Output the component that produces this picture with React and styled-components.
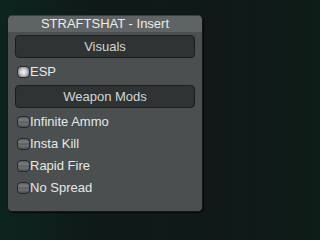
import React, { useState } from 'react';
import styled, { createGlobalStyle } from 'styled-components';

const GlobalStyle = createGlobalStyle`
    html, body {
        margin: 0;
        padding: 0;
        height: 100%;
    }
    body {
        background: linear-gradient(90deg, #0d241e 0%, #0f1a18 30%, #101918 70%, #0e1d19 100%);
        font-family: "Liberation Sans", Arial, sans-serif;
    }
`

const Page = styled.div`
    width: 219px;
    height: 230px;
    padding: 15px 0 0 7px;
    box-sizing: border-box;
`

const Window = styled.div`
    width: 196px;
    height: 197px;
    box-sizing: border-box;
    background: #4b4f4f;
    border: 1px solid #141717;
    border-top-color: #3a3e3e;
    border-radius: 5px;
    overflow: hidden;
    box-shadow: 1px 1px 1px rgba(0,0,0,0.6);
`

const TitleBar = styled.div`
    height: 16px;
    background: #5f6363;
    color: #ececec;
    font-size: 13px;
    line-height: 16px;
    text-align: center;
    white-space: nowrap;
`

const Content = styled.div`
    display: flex;
    flex-direction: column;
    gap: 6px;
    padding: 3px 7px 0 7px;
`

const SectionButton = styled.button`
    height: 23px;
    margin: 0;
    padding: 0;
    background: #2f3333;
    border: 1px solid #1b1e1e;
    border-radius: 4px;
    color: #d3d7d6;
    font-family: "Liberation Sans", Arial, sans-serif;
    font-size: 13px;
    line-height: 20px;
    cursor: pointer;
`

const ToggleGroup = styled.div`
    display: flex;
    flex-direction: column;
    gap: 7px;
`

const ToggleRow = styled.label`
    display: flex;
    align-items: center;
    height: 15px;
    padding-left: 2px;
    color: #e6e9e8;
    font-size: 13px;
    cursor: pointer;
`

const Box = styled.span`
    width: 13px;
    height: 12px;
    box-sizing: border-box;
    margin-right: 0;
    border: 1px solid #262929;
    border-radius: 4px;
    background: ${p => p.$on
        ? 'radial-gradient(circle at 50% 50%, #f2f2f2 0%, #d6d6d6 35%, #8a8d8d 75%, #555 100%)'
        : 'linear-gradient(180deg, #5a5d5d 0%, #7b7e7e 30%, #5c5f5f 50%, #6e7171 70%, #4a4d4d 100%)'};
`

const Toggle = ({ label, on, onClick }) => (
    <ToggleRow onClick={onClick}>
        <Box $on={on}/>
        {label}
    </ToggleRow>
)

const App = () => {
    const [opts, setOpts] = useState({
        esp: true,
        ammo: false,
        kill: false,
        rapid: false,
        spread: false,
    });

    const flip = (key) => () => setOpts({ ...opts, [key]: !opts[key] });

    return (
        <>
        <GlobalStyle/>
        <Page>
            <Window>
                <TitleBar>STRAFTSHAT - Insert</TitleBar>
                <Content>
                    <SectionButton>Visuals</SectionButton>
                    <Toggle label='ESP' on={opts.esp} onClick={flip('esp')}/>
                    <SectionButton>Weapon Mods</SectionButton>
                    <ToggleGroup>
                        <Toggle label='Infinite Ammo' on={opts.ammo} onClick={flip('ammo')}/>
                        <Toggle label='Insta Kill' on={opts.kill} onClick={flip('kill')}/>
                        <Toggle label='Rapid Fire' on={opts.rapid} onClick={flip('rapid')}/>
                        <Toggle label='No Spread' on={opts.spread} onClick={flip('spread')}/>
                    </ToggleGroup>
                </Content>
            </Window>
        </Page>
        </>
    );
}

export default App;
